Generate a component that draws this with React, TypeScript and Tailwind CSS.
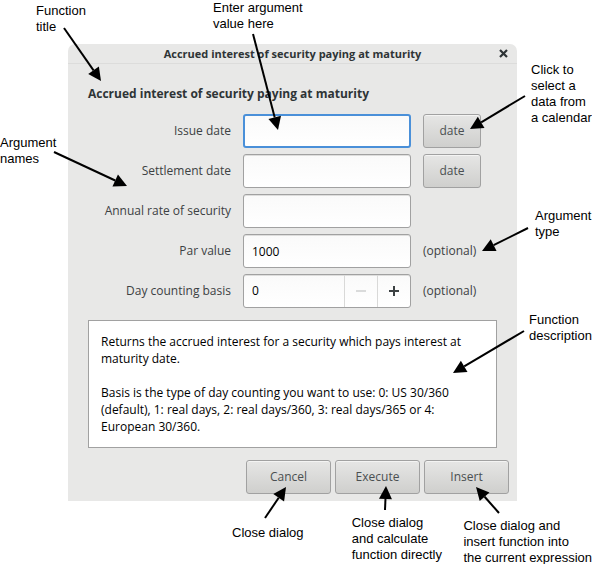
import type { ReactNode } from "react";

const uiFont = "font-['Open_Sans','Noto_Sans',sans-serif]";
const noteFont = "font-['Liberation_Sans',Arial,sans-serif]";

const fieldBox =
  "h-[34px] w-full rounded-[3px] border border-[#a1a1a1] bg-linear-to-b from-[#fafafa] to-white shadow-[inset_0_1px_0_#dededd]";

const buttonBox =
  "h-[34px] rounded-[3px] border border-[#a1a1a1] bg-linear-to-b from-[#e6e6e5] to-[#cfcfcd] text-center font-medium text-[#4a4f51] shadow-[inset_0_1px_0_#f4f4f3]";

function Note({ className, children }: { className: string; children: ReactNode }) {
  return <p className={`whitespace-pre text-[13px] leading-4 text-black ${className}`}>{children}</p>;
}

const arrows: [number, number, number, number][] = [
  [64, 28, 101, 81],
  [253, 34, 278, 130],
  [54, 152, 127, 186],
  [525, 96, 470, 129],
  [528, 228, 482, 251],
  [524, 331, 453, 373],
  [265, 518, 286, 487],
  [385, 510, 386, 486],
  [499, 513, 476, 487],
];

function Arrow({ from, to }: { from: [number, number]; to: [number, number] }) {
  const length = Math.hypot(to[0] - from[0], to[1] - from[1]);
  const ux = (to[0] - from[0]) / length;
  const uy = (to[1] - from[1]) / length;
  const bx = to[0] - ux * 13;
  const by = to[1] - uy * 13;
  return (
    <g>
      <line x1={from[0]} y1={from[1]} x2={bx} y2={by} stroke="black" strokeWidth="2" />
      <polygon
        points={`${to[0]},${to[1]} ${bx - uy * 6.5},${by + ux * 6.5} ${bx + uy * 6.5},${by - ux * 6.5}`}
        fill="black"
      />
    </g>
  );
}

function Row({ id, label, children, extra }: { id: string; label: string; children: ReactNode; extra?: ReactNode }) {
  return (
    <div className="grid grid-cols-[143px_1fr_74px] items-center gap-x-3">
      <label htmlFor={id} className="text-right">
        {label}
      </label>
      {children}
      <div>{extra}</div>
    </div>
  );
}

function Dialog() {
  return (
    <section
      role="dialog"
      aria-labelledby="dialog-title"
      className={`overflow-hidden rounded-t-[7px] bg-[#e8e8e7] text-[12px] text-[#3c4143] ${uiFont}`}
    >
      <header className="grid h-5 grid-cols-[28px_1fr_28px] items-center border-b border-[#dcdcdb]">
        <h1 id="dialog-title" className="col-start-2 text-center text-[11px] leading-4 font-bold whitespace-nowrap text-[#2e3436]">
          Accrued interest of security paying at maturity
        </h1>
        <button type="button" aria-label="Close" className="flex h-4 items-center justify-center">
          <svg width="9" height="9" viewBox="0 0 9 9" stroke="#2e3436" strokeWidth="2.2">
            <path d="M1 1 8 8M8 1 1 8" />
          </svg>
        </button>
      </header>
      <form className="flex flex-col px-5" onSubmit={(e) => e.preventDefault()}>
        <h2 className="pt-[21px] pb-[11px] leading-[18px] font-bold whitespace-nowrap text-[#2e3436]">
          Accrued interest of security paying at maturity
        </h2>
        <div className="flex flex-col gap-1.5">
          <Row id="issue" label="Issue date" extra={<button type="button" className={`w-[58px] ${buttonBox}`}>date</button>}>
            <input id="issue" className="h-[34px] w-full rounded-[3px] border-2 border-[#4a90d9] bg-linear-to-b from-[#fafafa] to-white px-2 outline-none" />
          </Row>
          <Row id="settlement" label="Settlement date" extra={<button type="button" className={`w-[58px] ${buttonBox}`}>date</button>}>
            <input id="settlement" className={`px-2 ${fieldBox}`} />
          </Row>
          <Row id="rate" label="Annual rate of security">
            <input id="rate" className={`px-2 ${fieldBox}`} />
          </Row>
          <Row id="par" label="Par value" extra="(optional)">
            <input id="par" defaultValue="1000" className={`px-2 text-black ${fieldBox}`} />
          </Row>
          <Row id="basis" label="Day counting basis" extra="(optional)">
            <div className={`flex ${fieldBox}`}>
              <input id="basis" defaultValue="0" inputMode="numeric" className="w-0 flex-1 bg-transparent px-2 text-black outline-none" />
              <button type="button" aria-label="Decrease" className="flex w-[33px] items-center justify-center border-l border-[#d9d9d8]">
                <svg width="10" height="10" viewBox="0 0 10 10">
                  <path d="M0 5h10" stroke="#dadbdb" strokeWidth="2" />
                </svg>
              </button>
              <button type="button" aria-label="Increase" className="flex w-[33px] items-center justify-center border-l border-[#d9d9d8]">
                <svg width="10" height="10" viewBox="0 0 10 10">
                  <path d="M0 5h10M5 0v10" stroke="#3c4143" strokeWidth="2" />
                </svg>
              </button>
            </div>
          </Row>
        </div>
        <div className="mt-3 h-32 border border-[#a1a1a1] bg-white px-3 py-3 leading-[17px] text-black">
          <p>
            Returns the accrued interest for a security which pays interest at
            <br />
            maturity date.
          </p>
          <p className="mt-[17px]">
            Basis is the type of day counting you want to use: 0: US 30/360
            <br />
            (default), 1: real days, 2: real days/360, 3: real days/365 or 4:
            <br />
            European 30/360.
          </p>
        </div>
      </form>
      <footer className="flex justify-end gap-1 px-2 pt-3 pb-[7px]">
        <button type="button" className={`w-[85px] ${buttonBox}`}>Cancel</button>
        <button type="button" className={`w-[85px] ${buttonBox}`}>Execute</button>
        <button type="button" className={`w-[85px] ${buttonBox}`}>Insert</button>
      </footer>
    </section>
  );
}

export default function App() {
  return (
    <main className={`relative bg-white ${noteFont}`}>
      <div className="flex h-11 pl-9">
        <Note className="w-[177px] pt-[3px]">{"Function\ntitle"}</Note>
        <Note className="">{"Enter argument\nvalue here"}</Note>
      </div>
      <div className="grid grid-cols-[68px_1fr_75px]">
        <Note className="pt-[91px]">{"Argument\nnames"}</Note>
        <Dialog />
        <div className="pl-3">
          <Note className="pt-[18px] pl-0.5">{"Click to\nselect a\ndata from\na calendar"}</Note>
          <Note className="pt-[82px] pl-1.5">{"Argument\ntype"}</Note>
          <Note className="pt-[72px]">{"Function\ndescription"}</Note>
        </div>
      </div>
      <div className="flex h-[63px] overflow-hidden pl-[232px]">
        <Note className="w-[120px] pt-6">Close dialog</Note>
        <Note className="w-28 pt-3.5">{"Close dialog\nand calculate\nfunction directly"}</Note>
        <Note className="pt-[17px]">{"Close dialog and\ninsert function into\nthe current expression"}</Note>
      </div>
      <svg className="pointer-events-none absolute inset-0 size-full" aria-hidden="true">
        {arrows.map(([x1, y1, x2, y2]) => (
          <Arrow key={`${x1}-${y1}`} from={[x1, y1]} to={[x2, y2]} />
        ))}
      </svg>
    </main>
  );
}
